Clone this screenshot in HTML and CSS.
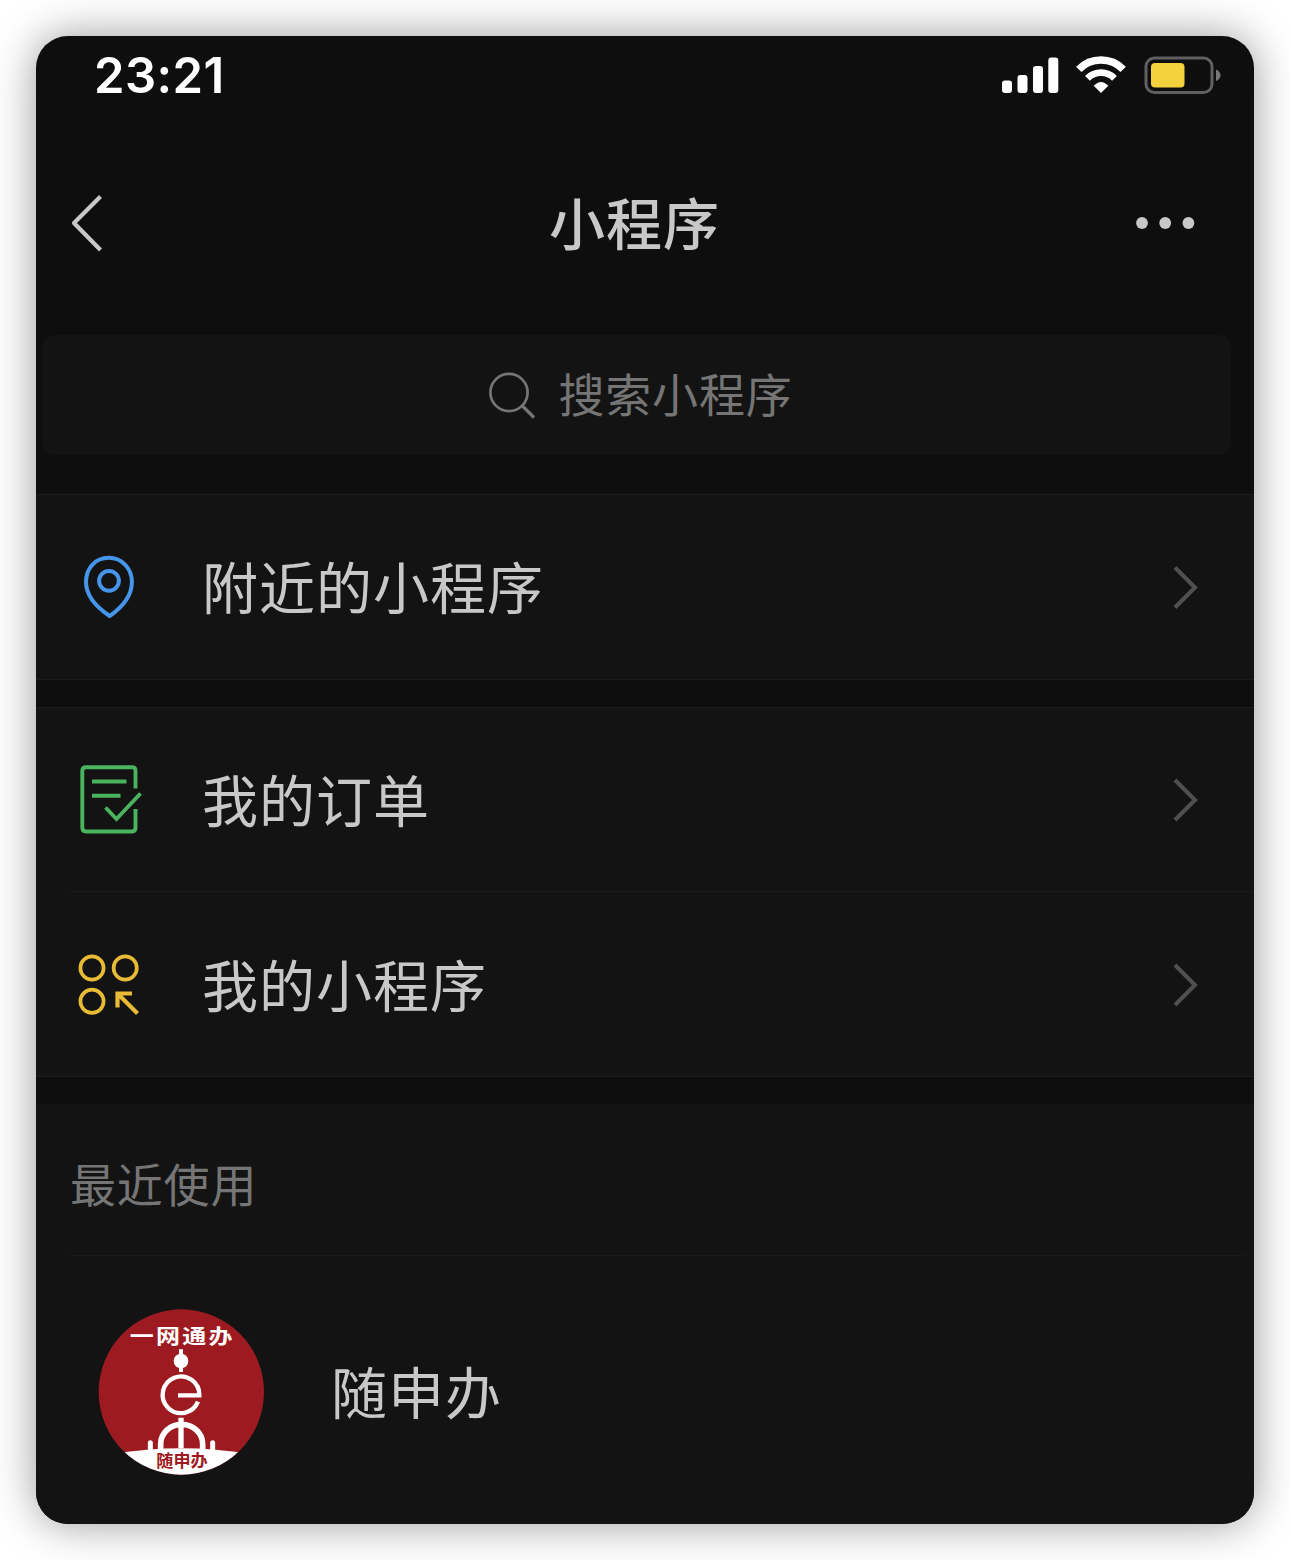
FILE: index.html
```html
<!DOCTYPE html>
<html lang="zh-CN">
<head>
<meta charset="utf-8">
<title>小程序</title>
<link rel="stylesheet" href="styles.css">
</head>
<body>
<main class="phone">
  <div class="status">
    <span class="time">23:21</span>
    <div class="indicators">
      <svg class="signal" width="58" height="38" viewBox="0 0 58 38" fill="#fff"><rect x="1" y="24.500" width="10" height="12.500" rx="3"/><rect x="16.500" y="19" width="10" height="18" rx="3"/><rect x="32" y="10" width="10" height="27" rx="3"/><rect x="47.300" y="1.500" width="10" height="35.500" rx="3"/></svg>
      <svg class="wifi" width="52" height="38" viewBox="0 0 52 38" fill="none" stroke="#fff"><path d="M3.800 13.300A31 31 0 0 1 48.200 13.300" stroke-width="7.500"/><path d="M12.500 22.300A19 19 0 0 1 39.500 22.300" stroke-width="6.800"/><path d="M18.700 29.800Q26 22 33.300 29.800L26 37Z" fill="#fff" stroke="none"/></svg>
      <svg class="battery" width="78" height="38" viewBox="0 0 78 38"><rect x="2" y="2" width="66" height="34.500" rx="8.500" fill="none" stroke="#606060" stroke-width="3"/><rect x="7" y="7" width="33.500" height="24.500" rx="4" fill="#f5d13d"/><path d="M72 13.500Q76.500 15.500 76.500 19.300T72 25Z" fill="#777"/></svg>
    </div>
  </div>
  <header class="nav">
    <svg class="back" width="36" height="60" viewBox="0 0 36 60" fill="none" stroke="#c8c8c8" stroke-width="4.200"><path d="M31.500 3.500L5 30L31.500 57" stroke-linejoin="round"/></svg>
    <h1>小程序</h1>
    <svg class="more" width="60" height="14" viewBox="0 0 60 14" fill="#c8c8c8"><circle cx="6" cy="7" r="5.900"/><circle cx="29.200" cy="7" r="5.900"/><circle cx="52.400" cy="7" r="5.900"/></svg>
  </header>
  <div class="search">
    <svg width="50" height="50" viewBox="0 0 50 50" fill="none" stroke="#757575" stroke-width="2.700"><circle cx="21" cy="22.500" r="18.600"/><path d="M34.500 36L46 47.500" stroke-width="3.200"/></svg>
    <span>搜索小程序</span>
  </div>
  <section class="group nearby">
    <div class="row">
      <svg class="icon" width="72" height="72" viewBox="0 0 72 72" fill="none" stroke="#4596ea" stroke-width="4"><path d="M35.800 6.800C22 6.800 13 17.500 13 31C13 45 24 56.500 36.700 65C49.500 56 58.900 44 58.900 31C58.900 17.500 49 6.800 35.800 6.800Z" stroke-linejoin="round"/><circle cx="36" cy="29.800" r="9.900"/></svg>
      <span class="label">附近的小程序</span>
      <svg class="chevron" width="28" height="46" viewBox="0 0 28 46"><path d="M4 3.500L24 23.500L4 43.500"/></svg>
    </div>
  </section>
  <section class="group mine">
    <div class="row first">
      <svg class="icon" width="72" height="72" viewBox="0 0 72 72" fill="none" stroke="#49b45d" stroke-width="3.900"><path d="M62.500 24.500V6.500Q62.500 3.300 59 3.300H13Q9.300 3.300 9.300 7V63.500Q9.300 67.500 13 67.500H59Q62.500 67.500 62.500 63.500V45"/><path d="M19 17.500H53.500M19 31.800H47.500"/><path d="M32.500 43.500L43.500 55L67.500 29.500"/></svg>
      <span class="label">我的订单</span>
      <svg class="chevron" width="28" height="46" viewBox="0 0 28 46"><path d="M4 3L24 23L4 43"/></svg>
    </div>
    <div class="row lined">
      <svg class="icon" width="72" height="72" viewBox="0 0 72 72" fill="none" stroke="#e8ba36" stroke-width="3.700"><circle cx="19" cy="19" r="11.600"/><circle cx="52.200" cy="19" r="11.600"/><circle cx="19" cy="52.300" r="11.600"/><path d="M44.500 58.500V44.500H59M44.500 44.500L64.500 64.500" stroke-width="4.200"/></svg>
      <span class="label">我的小程序</span>
      <svg class="chevron" width="28" height="46" viewBox="0 0 28 46"><path d="M4 3L24 23L4 43"/></svg>
    </div>
  </section>
  <section class="recent">
    <h2>最近使用</h2>
    <div class="app">
      <svg class="logo" width="166" height="166" viewBox="55 57 498 498">
        <defs><clipPath id="disc"><circle cx="305" cy="306" r="248"/></clipPath></defs>
        <g clip-path="url(#disc)">
          <rect x="55" y="57" width="500" height="498" fill="#9d1b20"/>
          <path d="M100 492Q306 458 510 492V560H100Z" fill="#fff"/>
        </g>
        <text class="logo-top" transform="translate(150 163) scale(1.160 1)">一网通办</text>
        <text class="logo-bottom" x="230" y="532" textLength="154" lengthAdjust="spacingAndGlyphs">随申办</text>
        <circle cx="304" cy="213" r="22" fill="#fff"/>
        <g fill="none" stroke="#fff" stroke-width="12">
          <path d="M304 178V246"/>
          <path d="M295 316H359A55 55 0 1 0 355 335" stroke-width="13"/>
          <path d="M304 383V475" stroke-width="16"/>
          <path d="M243 478V462A63 59 0 0 1 369 462V478" stroke-width="17"/>
          <path d="M212 478V458M399 478V458" stroke-width="15" stroke-linecap="round"/>
        </g>
      </svg>
      <span class="label">随申办</span>
    </div>
  </section>
</main>
</body>
</html>
```
FILE: styles.css
```css
* { box-sizing: border-box; }

body {
  margin: 0;
  padding: 36px;
  height: 1560px;
  background: #fff;
  overflow: hidden;
  font-family: "Noto Sans CJK SC", sans-serif;
  color: #c8c8c8;
}

.phone {
  display: flex;
  flex-direction: column;
  width: 1218px;
  height: 1488px;
  overflow: hidden;
  border-radius: 32px;
  background: #0e0e0e;
  box-shadow: 0 0 44px rgba(0, 0, 0, .4);
}

svg { flex: none; display: block; }

.status {
  display: flex;
  justify-content: space-between;
  align-items: center;
  height: 78px;
  padding: 0 32px 0 58px;
}

.time {
  padding-top: 2px;
  font: 600 49px/60px Inter, sans-serif;
  letter-spacing: .4px;
  color: #fff;
}

.indicators { display: flex; }
.wifi { margin-left: 16px; }
.battery { margin-left: 17px; }

.nav {
  display: grid;
  grid-template-columns: 160px 1fr 160px;
  align-items: center;
  height: 221px;
  padding: 0 58px 3px 33px;
}

h1 {
  margin: 0;
  padding: 0 0 5px 4px;
  text-align: center;
  font-size: 56px;
  line-height: 80px;
  font-weight: 500;
  letter-spacing: 1px;
}

.more { justify-self: end; }

.search {
  display: flex;
  justify-content: center;
  align-items: center;
  gap: 21px;
  height: 120px;
  margin: 0 23px 0 6px;
  padding-left: 7px;
  border-radius: 12px;
  background: #131313;
  color: #757575;
  font-size: 46px;
  line-height: 64px;
  letter-spacing: .8px;
}

.search span { padding-bottom: 6px; }

.group {
  background: #131313;
  border-top: 1px solid #1c1c1c;
  border-bottom: 1px solid #1c1c1c;
}

.nearby { margin-top: 39px; }
.mine { margin-top: 27px; }

.row {
  display: flex;
  align-items: center;
  height: 184px;
  margin-left: 33px;
  padding: 0 55px 0 4px;
}

.first { height: 183px; }

.lined {
  height: 185px;
  padding-top: 1px;
  border-top: 1px solid #1a1a1a;
}

.row .label { margin-left: 57px; }

.label {
  padding-bottom: 4px;
  font-size: 56px;
  line-height: 80px;
  letter-spacing: 1px;
}

.chevron {
  margin-left: auto;
  fill: none;
  stroke: #505050;
  stroke-width: 4;
}

.recent {
  flex: 1;
  margin-top: 27px;
  padding: 0 10px 0 33px;
  background: #131313;
}

h2 {
  margin: 0;
  height: 152px;
  padding: 45px 0 0 1px;
  border-bottom: 1px solid #1a1a1a;
  color: #757575;
  font-size: 46px;
  line-height: 66px;
  font-weight: 400;
  letter-spacing: .8px;
}

.app {
  display: flex;
  align-items: center;
  gap: 67px;
  padding: 53px 0 0 29px;
}

.logo-top { font-size: 62px; font-weight: 700; letter-spacing: 6px; fill: #fff; }
.logo-bottom { font-size: 50px; font-weight: 700; fill: #9d1b20; }
```
